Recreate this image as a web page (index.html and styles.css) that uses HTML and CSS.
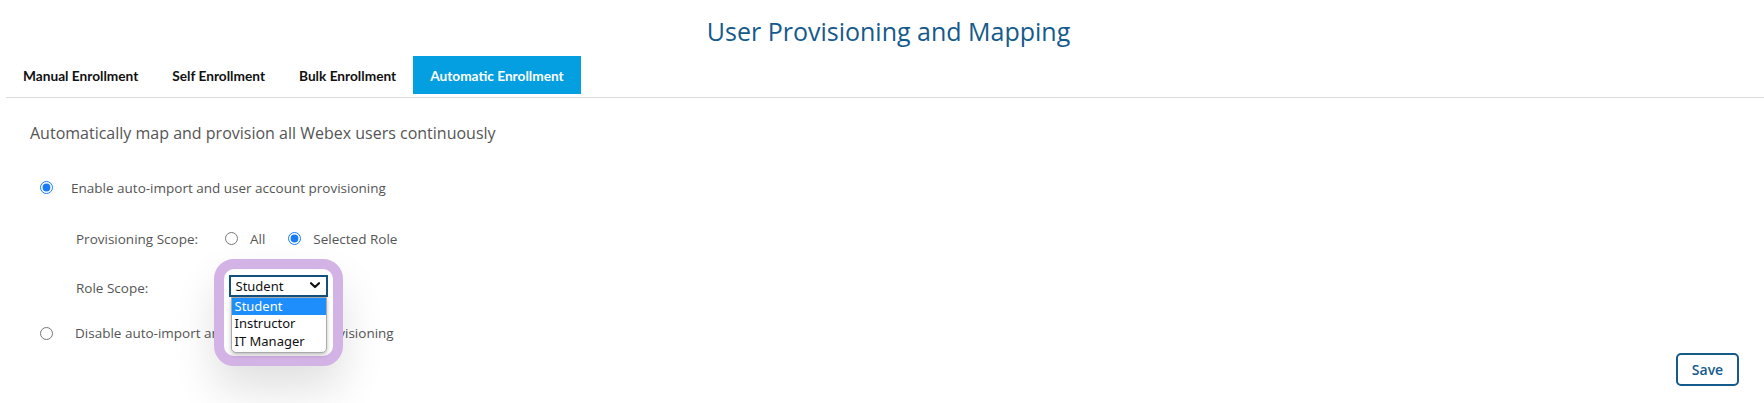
FILE: index.html
```html
<!DOCTYPE html>
<html lang="en">
<head>
<meta charset="utf-8">
<title>User Provisioning and Mapping</title>
<link rel="stylesheet" href="styles.css">
</head>
<body>
<div class="page">
  <h1 class="title">User Provisioning and Mapping</h1>
  <div class="tabs">
    <div class="tab">Manual Enrollment</div>
    <div class="tab">Self Enrollment</div>
    <div class="tab">Bulk Enrollment</div>
    <div class="tab active">Automatic Enrollment</div>
  </div>
  <div class="content">
    <p class="desc">Automatically map and provision all Webex users continuously</p>
    <label class="option-row">
      <input type="radio" name="mode" class="radio" checked>
      <span class="option-text">Enable auto-import and user account provisioning</span>
    </label>
    <div class="sub-row scope-row">
      <span class="sub-label">Provisioning Scope:</span>
      <label class="scope-item">
        <input type="radio" name="scope" class="radio">
        <span class="scope-text">All</span>
      </label>
      <label class="scope-item">
        <input type="radio" name="scope" class="radio" checked>
        <span class="scope-text">Selected Role</span>
      </label>
    </div>
    <div class="sub-row role-row">
      <span class="sub-label">Role Scope:</span>
      <div class="select-wrap">
        <div class="ring"></div>
        <div class="select-box">
          <span>Student</span>
          <svg class="chev" width="10" height="7" viewBox="0 0 10 7"><path d="M1 1.2 L5 5 L9 1.2" fill="none" stroke="#111" stroke-width="2.2" stroke-linecap="round" stroke-linejoin="round"/></svg>
        </div>
        <div class="list">
          <div class="opt selected">Student</div>
          <div class="opt">Instructor</div>
          <div class="opt">IT Manager</div>
        </div>
      </div>
    </div>
    <label class="option-row second">
      <input type="radio" name="mode" class="radio">
      <span class="option-text">Disable auto-import and user account provisioning</span>
    </label>
    <div class="actions">
      <button class="save">Save</button>
    </div>
  </div>
</div>
</body>
</html>
```
FILE: styles.css
```css
* { box-sizing: border-box; }
html, body { margin: 0; padding: 0; background: #fff; }
body { font-family: "Open Sans", "Noto Sans", sans-serif; color: #555; }

.page { width: 1764px; height: 403px; overflow: hidden; }

.title {
  margin: 0;
  padding-top: 15px;
  padding-left: 13px;
  height: 56px;
  text-align: center;
  font-size: 25px;
  line-height: 32px;
  font-weight: 400;
  color: #155a8c;
}

.tabs {
  display: flex;
  margin-left: 6px;
  padding-bottom: 3px;
  border-bottom: 1px solid #dddddd;
}
.tab {
  height: 38px;
  padding: 0 17px;
  display: flex;
  align-items: center;
  font-family: "Lato", sans-serif;
  font-weight: 700;
  font-size: 13.7px;
  color: #111;
}
.tab.active { background: #049fe0; color: #fff; }

.content { padding-left: 30px; position: relative; }

.desc {
  margin: 0;
  padding-top: 24px;
  height: 72.5px;
  font-size: 16px;
  line-height: 22px;
  color: #555;
}

.radio {
  margin: 0;
  width: 13px;
  height: 13px;
  accent-color: #1a7cf2;
}

.option-row {
  display: flex;
  align-items: center;
  height: 34px;
  padding-left: 10px;
}
.option-text { margin-left: 18px; font-size: 13.5px; color: #555; }
.option-row.second { margin-top: 4.5px; }
.option-row.second .option-text { margin-left: 22px; }

.sub-row {
  display: flex;
  align-items: center;
  height: 50px;
  padding-left: 46px;
  font-size: 13.5px;
}
.scope-row { margin-top: 9px; }
.sub-label { width: 152.5px; color: #555; }
.scope-row .sub-label { width: 149px; }
.scope-item { display: flex; align-items: center; margin-right: 23px; }
.scope-text { margin-left: 12px; color: #555; }

.role-row { height: 48px; }
.select-wrap { position: relative; margin-bottom: 4px; }
.select-box {
  position: relative;
  z-index: 3;
  width: 99px;
  height: 22px;
  border: 2px solid #14507e;
  background: #fff;
  display: flex;
  align-items: center;
  justify-content: space-between;
  padding: 0 6px 0 5px;
  font-family: "Noto Sans", sans-serif;
  font-size: 13px;
  color: #111;
}
.list {
  position: absolute;
  z-index: 3;
  left: 2px;
  top: 22px;
  width: 96px;
  background: #fff;
  border: 1px solid #aaa;
  border-radius: 0 0 5px 5px;
  box-shadow: 0 2px 4px rgba(0,0,0,0.25);
  font-family: "Noto Sans", sans-serif;
  font-size: 13px;
  color: #111;
  padding-bottom: 2px;
}
.opt { height: 17.5px; line-height: 17.5px; padding-left: 3px; }
.opt.selected { background: #1e8efc; color: #fff; }

.ring {
  position: absolute;
  z-index: 2;
  left: -15px;
  top: -16px;
  width: 129px;
  height: 107px;
  border: 10px solid #d3b2e5;
  border-radius: 20px;
  background: #fff;
  box-shadow: 0 24px 44px rgba(0,0,0,0.12);
}

.actions {
  display: flex;
  justify-content: flex-end;
  padding-right: 25px;
  margin-top: 3px;
}
.save {
  width: 63px;
  height: 33px;
  border: 2px solid #155a8c;
  border-radius: 5px;
  background: #fff;
  color: #155a8c;
  font-family: "Open Sans", sans-serif;
  font-size: 14px;
  font-weight: 600;
  padding: 0;
}
```
